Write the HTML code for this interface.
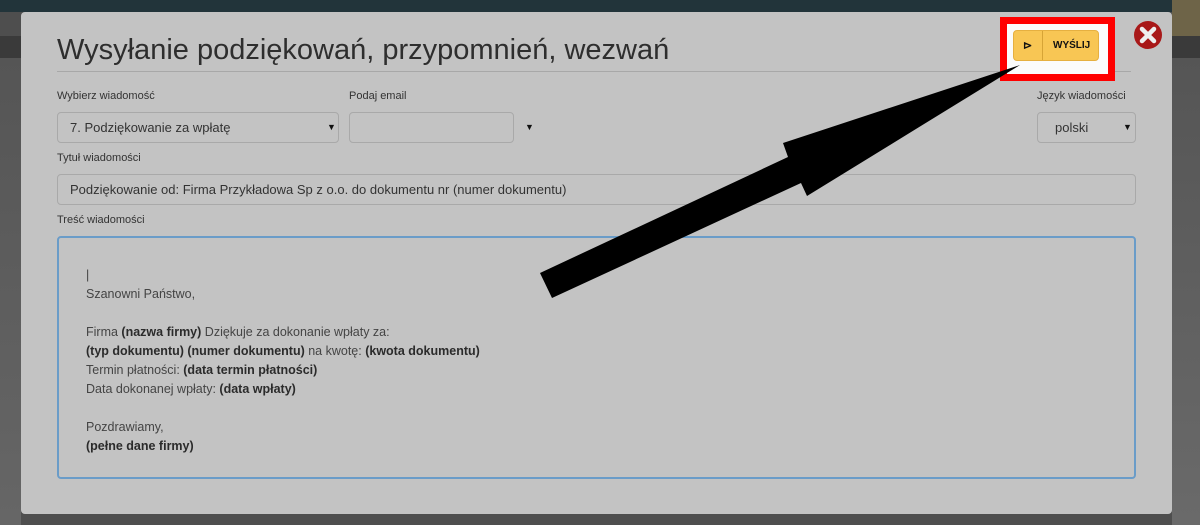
<!DOCTYPE html>
<html><head><meta charset="utf-8"><style>
*{box-sizing:border-box;margin:0;padding:0}
body{width:1200px;height:525px;overflow:hidden;position:relative;background:#4e4e4e;font-family:"Liberation Sans",sans-serif}
.nav{position:absolute;left:0;top:0;width:1200px;height:12px;background:#22343a}
.bar2{position:absolute;left:0;top:36px;width:1200px;height:22px;background:#3a3a3a}
.gold{position:absolute;left:1172px;top:0;width:28px;height:36px;background:#6e6448}
.leftbg{position:absolute;left:0;top:58px;width:21px;height:467px;background:linear-gradient(#555,#666)}
.rightbg{position:absolute;left:1172px;top:58px;width:28px;height:467px;background:linear-gradient(#555,#6a6a6a)}
.modal{position:absolute;left:21px;top:12px;width:1151px;height:502px;background:#c3c3c3;border-radius:4px}
h1{position:absolute;left:36px;top:22px;font-weight:normal;font-size:29px;color:#2e2e2e;font-family:"Liberation Sans",sans-serif}
.hr{position:absolute;left:36px;top:59px;width:1074px;border-top:1px solid #a8a8a8}
.lbl{position:absolute;font-size:11px;color:#333}
.inp{position:absolute;border:1px solid #a9a9a9;border-radius:4px;background:#c3c3c3;font-size:13px;color:#333;padding-left:12px;display:flex;align-items:center}
.caret{position:absolute;font-size:9px;color:#111}
.ta{position:absolute;left:36px;top:224px;width:1079px;height:243px;border:2px solid #6a9cc8;border-radius:4px;padding:28px 0 0 27px;font-size:12.5px;color:#444;line-height:19px}
.ta b{color:#2b2b2b}
.redbox{position:absolute;left:1000px;top:17px;width:115px;height:64px;border:7px solid #f00;background:#fbfbfb}
.btn{position:absolute;left:1013px;top:30px;width:86px;height:31px;background:#f8c654;border:1px solid #e6b040;border-radius:4px;font-size:10px;font-weight:bold;color:#111}
.btn .sep{position:absolute;left:28px;top:0;height:29px;border-left:1px solid #d7a436}
</style></head><body>
<div class="nav"></div><div class="bar2"></div><div class="gold"></div><div class="leftbg"></div><div class="rightbg"></div>
<div class="modal">
<h1>Wysyłanie podziękowań, przypomnień, wezwań</h1>
<div class="hr"></div>
<div class="lbl" style="left:36px;top:78px">Wybierz wiadomość</div>
<div class="lbl" style="left:328px;top:78px">Podaj email</div>
<div class="lbl" style="left:1016px;top:78px">Język wiadomości</div>
<div class="inp" style="left:36px;top:100px;width:282px;height:31px">7. Podziękowanie za wpłatę</div>
<div class="caret" style="left:306px;top:110px">▼</div>
<div class="inp" style="left:328px;top:100px;width:165px;height:31px"></div>
<div class="caret" style="left:504px;top:110px">▼</div>
<div class="inp" style="left:1016px;top:100px;width:99px;height:31px;padding-left:17px">polski</div>
<div class="caret" style="left:1102px;top:110px">▼</div>
<div class="lbl" style="left:36px;top:140px">Tytuł wiadomości</div>
<div class="inp" style="left:36px;top:162px;width:1079px;height:31px">Podziękowanie od: Firma Przykładowa Sp z o.o. do dokumentu nr (numer dokumentu)</div>
<div class="lbl" style="left:36px;top:202px">Treść wiadomości</div>
<div class="ta">|<br>Szanowni Państwo,<br><br>Firma <b>(nazwa firmy)</b> Dziękuje za dokonanie wpłaty za:<br><b>(typ dokumentu) (numer dokumentu)</b> na kwotę: <b>(kwota dokumentu)</b><br>Termin płatności: <b>(data termin płatności)</b><br>Data dokonanej wpłaty: <b>(data wpłaty)</b><br><br>Pozdrawiamy,<br><b>(pełne dane firmy)</b></div>
</div>
<div class="redbox"></div>
<div class="btn"><span style="position:absolute;left:9px;top:8px;font-size:11px">⊳</span><div class="sep"></div><span style="position:absolute;left:39px;top:9px">WYŚLIJ</span></div>
<svg style="position:absolute;left:0;top:0" width="1200" height="525">
<polygon points="540,273 788,157 783,143 1020,65 807,196 801,183 552,298" fill="#000"/>
<circle cx="1148" cy="35" r="14" fill="#a81818"/>
<path d="M1142 29 L1154 41 M1154 29 L1142 41" stroke="#eee" stroke-width="4.5" stroke-linecap="round"/>
</svg>
</body></html>
